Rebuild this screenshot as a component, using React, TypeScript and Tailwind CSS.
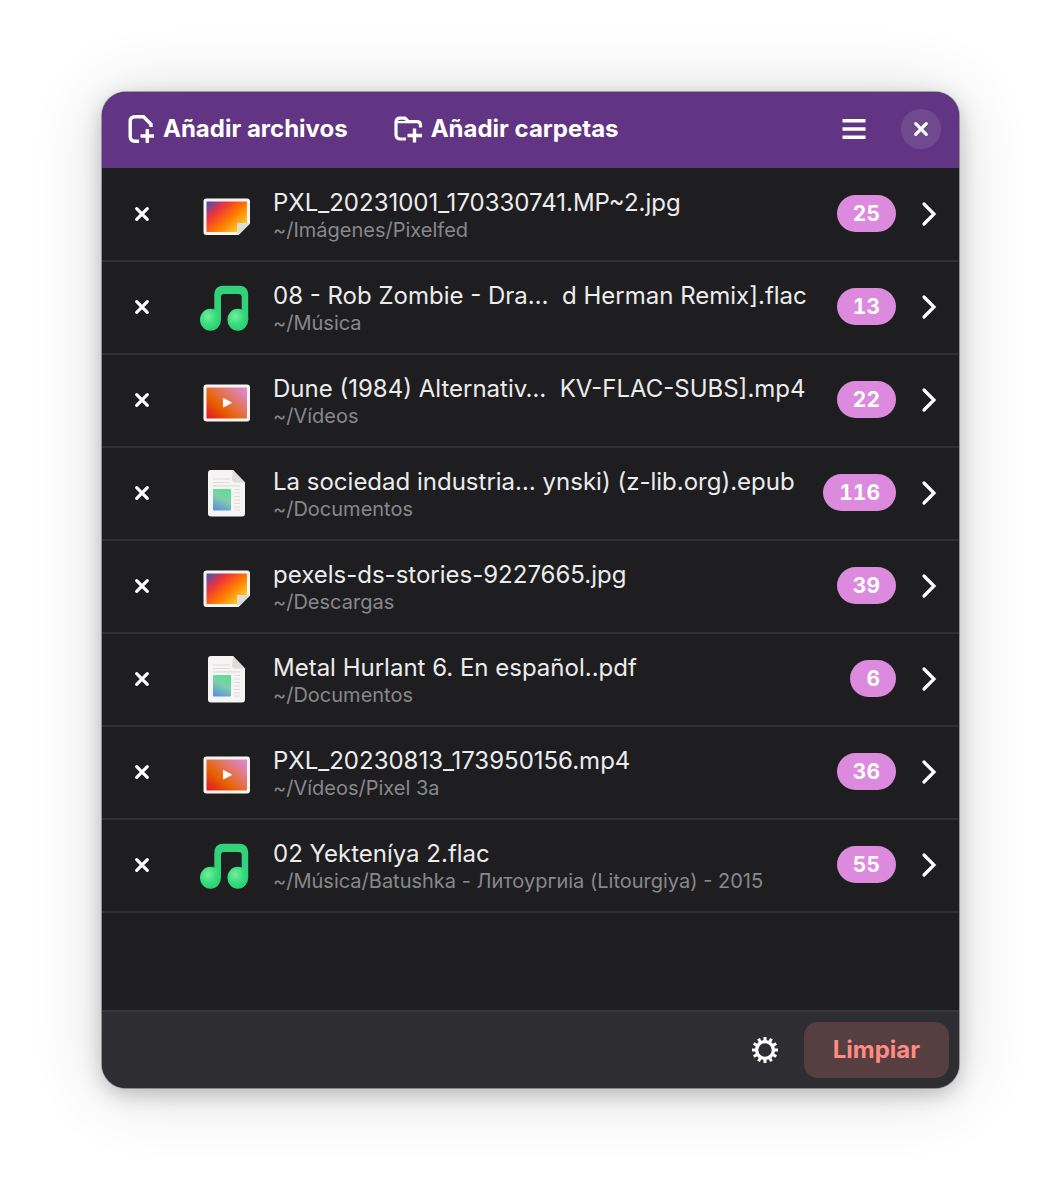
import React from 'react';

type FileKind = 'image' | 'audio' | 'video' | 'document';

interface FileEntry {
  name: string;
  folder: string;
  kind: FileKind;
  count: number;
}

const files: FileEntry[] = [
  { name: 'PXL_20231001_170330741.MP~2.jpg', folder: '~/Imágenes/Pixelfed', kind: 'image', count: 25 },
  { name: '08 - Rob Zombie - Dra…  d Herman Remix].flac', folder: '~/Música', kind: 'audio', count: 13 },
  { name: 'Dune (1984) Alternativ…  KV-FLAC-SUBS].mp4', folder: '~/Vídeos', kind: 'video', count: 22 },
  { name: 'La sociedad industria… ynski) (z-lib.org).epub', folder: '~/Documentos', kind: 'document', count: 116 },
  { name: 'pexels-ds-stories-9227665.jpg', folder: '~/Descargas', kind: 'image', count: 39 },
  { name: 'Metal Hurlant 6. En español..pdf', folder: '~/Documentos', kind: 'document', count: 6 },
  { name: 'PXL_20230813_173950156.mp4', folder: '~/Vídeos/Pixel 3a', kind: 'video', count: 36 },
  { name: '02 Yekteníya 2.flac', folder: '~/Música/Batushka - Литоургиiа (Litourgiya) - 2015', kind: 'audio', count: 55 },
];

const CrossIcon = () => (
  <svg viewBox="0 0 16 16" className="h-4 w-4" fill="none" stroke="currentColor" strokeWidth="3.2" strokeLinecap="round">
    <path d="M2.7 2.7 13.3 13.3M13.3 2.7 2.7 13.3" />
  </svg>
);

const AddFileIcon = () => (
  <svg viewBox="0 0 28 30" className="h-[30px] w-7" fill="none" stroke="currentColor" strokeWidth="3.4">
    <path d="M12 27.2H8Q3.2 27.2 3.2 22.5V7.5Q3.2 2.7 8 2.7H16.5L24 10.2V13" />
    <path d="M20.3 15V29M13.5 22H27" />
  </svg>
);

const AddFolderIcon = () => (
  <svg viewBox="0 0 30 28" className="h-7 w-[30px]" fill="none" stroke="currentColor" strokeWidth="3.2">
    <path d="M13 24H7.5Q3 24 3 19.5V7Q3 3.2 7 3.2H12L15.5 6.6H24Q27.5 6.6 27.5 10.3V12.5" />
    <path d="M3 7.2H16" strokeWidth="2.2" />
    <path d="M21.5 13.5V27.5M14.5 20.5H29" strokeWidth="3.4" />
  </svg>
);

const MenuIcon = () => (
  <svg viewBox="0 0 24 22" className="h-[22px] w-6" fill="currentColor">
    <path d="M.5 1h23v3.5H.5zM.5 9.2h23v3.6H.5zM.5 17.5h23v3.5H.5z" />
  </svg>
);

const ChevronIcon = () => (
  <svg viewBox="0 0 16 26" className="h-[26px] w-4" fill="none" stroke="currentColor" strokeWidth="3.2" strokeLinecap="round">
    <path d="M3 3 13 13 3 23" />
  </svg>
);

const GearIcon = () => (
  <svg viewBox="0 0 28 28" className="h-7 w-7" fill="none" stroke="currentColor">
    <circle cx="14" cy="14" r="8.4" strokeWidth="3.4" />
    {[0, 30, 60, 90, 120, 150, 180, 210, 240, 270, 300, 330].map((angle) => (
      <path key={angle} d="M14 1V5" strokeWidth="3" transform={`rotate(${angle} 14 14)`} />
    ))}
  </svg>
);

const ImageIcon = () => (
  <svg viewBox="0 0 52 52" className="h-[52px] w-[52px]">
    <defs>
      <linearGradient id="photo" x1="0" y1="0" x2="1" y2="0.85">
        <stop offset="0" stopColor="#3b4fc4" />
        <stop offset="0.3" stopColor="#ed333b" />
        <stop offset="0.6" stopColor="#ff7800" />
        <stop offset="1" stopColor="#f8e030" />
      </linearGradient>
    </defs>
    <path d="M6.5 10.5H47Q50 10.5 50 13.5V35.5L38.5 47H6.5Q3.5 47 3.5 44V13.5Q3.5 10.5 6.5 10.5Z" fill="#f6f5f4" />
    <path d="M6.5 13.5H47V35H37.5V44H6.5Z" fill="url(#photo)" />
    <path d="M50 35.5L38.5 47H37.5V38Q37.5 35 40.5 35H50Z" fill="#deddda" />
  </svg>
);

const VideoIcon = () => (
  <svg viewBox="0 0 52 52" className="h-[52px] w-[52px]">
    <defs>
      <linearGradient id="clip" x1="0" y1="0.95" x2="1" y2="0.05">
        <stop offset="0" stopColor="#e01b24" />
        <stop offset="0.35" stopColor="#e66100" />
        <stop offset="0.55" stopColor="#e57045" />
        <stop offset="1" stopColor="#dc8add" />
      </linearGradient>
    </defs>
    <rect x="3.5" y="10.5" width="46.5" height="37" rx="3" fill="#f6f5f4" />
    <rect x="6.5" y="13.5" width="40.5" height="31" fill="url(#clip)" />
    <path d="M23.5 24.5V33L31.5 28.75Z" fill="#fff" stroke="#fff" strokeLinejoin="round" />
  </svg>
);

const AudioIcon = () => (
  <svg viewBox="0 0 52 52" className="h-[52px] w-[52px]">
    <defs>
      <radialGradient id="note" cx="0.38" cy="0.35" r="0.6">
        <stop offset="0" stopColor="#78eda0" />
        <stop offset="0.6" stopColor="#38df7e" />
        <stop offset="1" stopColor="#2ed073" />
      </radialGradient>
    </defs>
    <path
      d="M14.3 39V14Q14.3 4.8 23.5 4.8H39Q48.2 4.8 48.2 14V39H41.7V16Q41.7 13 38.7 13H24Q21 13 21 16V39Z"
      fill="#33d17a"
    />
    <ellipse cx="10.5" cy="38.8" rx="10.5" ry="11" fill="url(#note)" />
    <ellipse cx="37.8" cy="38.8" rx="10.4" ry="11" fill="url(#note)" />
  </svg>
);

const DocumentIcon = () => (
  <svg viewBox="0 0 52 52" className="h-[52px] w-[52px]">
    <defs>
      <linearGradient id="figure" x1="0.7" y1="0" x2="0.3" y2="1">
        <stop offset="0" stopColor="#5be08f" />
        <stop offset="0.45" stopColor="#80cfab" />
        <stop offset="1" stopColor="#5d94dc" />
      </linearGradient>
    </defs>
    <path d="M11 3H33L45 15.5V46.5Q45 49.5 42 49.5H11Q8 49.5 8 46.5V6Q8 3 11 3Z" fill="#f6f5f4" />
    <path d="M33 3L45 15.5H35Q32 15.5 32 12.5Z" fill="#deddda" />
    <path d="M13 12H30M13 15.5H30M13 18.8H40M34 22.5H40M34 26H40M34 29.5H40M34 33H40M34 36.5H40M34 40H40M34 43H40" stroke="#deddda" strokeWidth="1.2" />
    <rect x="13" y="22" width="18" height="21.5" rx="1" fill="url(#figure)" />
  </svg>
);

const kindIcons: Record<FileKind, React.FC> = {
  image: ImageIcon,
  audio: AudioIcon,
  video: VideoIcon,
  document: DocumentIcon,
};

const Header: React.FC = () => (
  <header className="flex h-[76px] items-center justify-between bg-[#613583] pr-[18px] pb-0.5 pl-[25px] text-white">
    <div className="flex items-center gap-[45px]">
      <button type="button" className="flex items-center gap-2 text-2xl font-bold">
        <AddFileIcon />
        <span>Añadir archivos</span>
      </button>
      <button type="button" className="flex items-center gap-2 text-2xl font-bold">
        <AddFolderIcon />
        <span>Añadir carpetas</span>
      </button>
    </div>
    <div className="flex items-center gap-[35px]">
      <button type="button" aria-label="Menú">
        <MenuIcon />
      </button>
      <button type="button" aria-label="Cerrar" className="flex h-10 w-10 items-center justify-center rounded-full bg-white/10">
        <CrossIcon />
      </button>
    </div>
  </header>
);

const FileRow: React.FC<{ file: FileEntry }> = ({ file }) => {
  const KindIcon = kindIcons[file.kind];

  return (
    <li className="flex h-[93px] items-center border-b-2 border-[#303032] pr-[22px] pb-0.5 pl-8 text-white">
      <button type="button" aria-label={`Quitar ${file.name}`}>
        <CrossIcon />
      </button>
      <div className="ml-[50px] shrink-0">
        <KindIcon />
      </div>
      <div className="ml-[21px] min-w-0 flex-1 pt-1">
        <p className="whitespace-pre text-2xl leading-7 text-[#ececec]">{file.name}</p>
        <p className="whitespace-pre text-xl leading-[26px] text-[#88888a]">{file.folder}</p>
      </div>
      <span className="flex h-[37px] items-center rounded-full bg-[#dc8add] px-4 text-[21px] font-bold tabular-nums">
        {file.count}
      </span>
      <button type="button" aria-label={`Ver ${file.name}`} className="ml-[25px]">
        <ChevronIcon />
      </button>
    </li>
  );
};

export default function App() {
  return (
    <div className="min-h-screen bg-white py-[92px] pr-[101px] pl-[102px] font-['Inter',sans-serif]">
      <main className="overflow-hidden rounded-3xl bg-[#1e1e20] shadow-[0_0_0_1px_rgba(0,0,0,0.3),0_6px_20px_rgba(0,0,0,0.22),0_4px_70px_rgba(0,0,0,0.16)]">
        <Header />
        <ul className="pt-px pb-[97px]">
          {files.map((file) => (
            <FileRow key={file.name} file={file} />
          ))}
        </ul>
        <footer className="flex h-[78px] items-center justify-end gap-6 border-t-2 border-[#38383c] bg-[#2e2d32] pr-[10px] text-white">
          <button type="button" aria-label="Preferencias" className="p-px">
            <GearIcon />
          </button>
          <button type="button" className="h-14 rounded-[14px] bg-[#573e40] px-[29px] text-2xl font-bold text-[#ff8c84]">
            Limpiar
          </button>
        </footer>
      </main>
    </div>
  );
}
